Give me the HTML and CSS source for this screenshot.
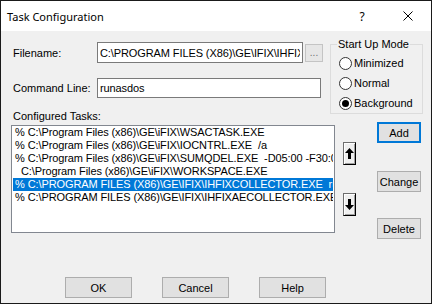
FILE: index.html
```html
<!DOCTYPE html>
<html lang="en">
  <head>
    <meta charset="UTF-8" />
    <title>Task Configuration</title>
    <link rel="stylesheet" href="styles.css">
  </head>
  <body>
    <div class="window">
      <div class="titlebar">
        <span class="title">Task Configuration</span>
        <span class="tb-help">?</span>
        <span class="tb-close">
          <svg width="10" height="10" viewBox="0 0 10 10">
            <path d="M0.5 0.5 L9.5 9.5 M9.5 0.5 L0.5 9.5" stroke="#000" stroke-width="1" fill="none" />
          </svg>
        </span>
      </div>

      <div class="dialog">
        <div class="top">
          <div class="fields">
            <div class="field-row filename-row">
              <label class="field-label" for="filename">Filename:</label>
              <input class="textbox filename" id="filename" type="text" value="C:\PROGRAM FILES (X86)\GE\IFIX\IHFIXCOLLECTOR.EXE" />
              <button class="browse" type="button">...</button>
            </div>
            <div class="field-row cmd-row">
              <label class="field-label" for="cmdline">Command Line:</label>
              <input class="textbox cmdline" id="cmdline" type="text" value="runasdos" />
            </div>
            <div class="tasks-label">Configured Tasks:</div>
          </div>

          <!-- startup mode group -->
          <fieldset class="mode">
            <legend>Start Up Mode</legend>
            <div class="radio"><span class="circle"></span>Minimized</div>
            <div class="radio"><span class="circle"></span>Normal</div>
            <div class="radio"><span class="circle checked"></span>Background</div>
          </fieldset>
        </div>

        <div class="tasks">
          <ul class="task-list">
            <li>% C:\Program Files (x86)\GE\iFIX\WSACTASK.EXE</li>
            <li>% C:\Program Files (x86)\GE\iFIX\IOCNTRL.EXE&nbsp; /a</li>
            <li>% C:\Program Files (x86)\GE\iFIX\SUMQDEL.EXE&nbsp; -D05:00 -F30:00</li>
            <li>&nbsp; C:\Program Files (x86)\GE\iFIX\WORKSPACE.EXE</li>
            <li class="selected">% C:\PROGRAM FILES (X86)\GE\IFIX\IHFIXCOLLECTOR.EXE&nbsp; runasdos</li>
            <li>% C:\PROGRAM FILES (X86)\GE\IFIX\IHFIXAECOLLECTOR.EXE</li>
          </ul>

          <div class="arrows">
            <button class="arrow-btn up" type="button">
              <svg width="9" height="11" viewBox="0 0 9 11">
                <path d="M4.5 0 L9 5 L6 5 L6 11 L3 11 L3 5 L0 5 Z" fill="#000" />
              </svg>
            </button>
            <button class="arrow-btn down" type="button">
              <svg width="9" height="11" viewBox="0 0 9 11">
                <path d="M4.5 11 L9 6 L6 6 L6 0 L3 0 L3 6 L0 6 Z" fill="#000" />
              </svg>
            </button>
          </div>

          <div class="actions">
            <button class="btn default add" type="button">Add</button>
            <button class="btn change" type="button">Change</button>
            <button class="btn delete" type="button">Delete</button>
          </div>
        </div>

        <div class="footer">
          <button class="btn wide" type="button">OK</button>
          <button class="btn wide" type="button">Cancel</button>
          <button class="btn wide" type="button">Help</button>
        </div>
      </div>
    </div>
  </body>
</html>
```

FILE: styles.css
```css
* {
  box-sizing: border-box;
}

body {
  margin: 0;
  font-family: "Liberation Sans", Arial, sans-serif;
  font-size: 11px;
  color: #000;
}

.window {
  width: 432px;
  height: 304px;
  border: 1px solid #1a1a1a;
  display: flex;
  flex-direction: column;
  background-color: #f0f0f0;
}

/* title bar */
.titlebar {
  height: 30px;
  background-color: #fff;
  display: flex;
  align-items: center;
  padding-left: 6px;
}

.title {
  font-family: "Noto Sans", sans-serif;
  font-size: 11px;
  flex: 1;
}

.tb-help {
  font-family: "Noto Sans", sans-serif;
  font-size: 12px;
  width: 46px;
  text-align: center;
}

.tb-close {
  width: 46px;
  display: flex;
  justify-content: center;
}

.dialog {
  flex: 1;
  padding-left: 10px;
}

/* top part: text fields + group box */
.top {
  display: flex;
  height: 91px;
}

.fields {
  width: 319px;
  padding-left: 2px;
  padding-top: 11px;
}

.field-row {
  display: flex;
  align-items: center;
}

.field-label {
  width: 84px;
}

.textbox {
  font-family: "Liberation Sans", Arial, sans-serif;
  font-size: 11px;
  letter-spacing: -0.1px;
  border: 1px solid #7a7a7a;
  background-color: #fff;
  padding: 0 2px;
  margin: 0;
  outline: none;
  color: #000;
}

.filename {
  width: 206px;
  height: 21px;
}

.browse {
  width: 18px;
  height: 18px;
  margin-left: 2px;
  padding: 0;
  border: 1px solid #c4c4c4;
  background-color: #e6e6e6;
  color: #707070;
  font-size: 10px;
  line-height: 10px;
}

.cmd-row {
  margin-top: 15px;
}

.cmdline {
  width: 224px;
  height: 20px;
}

.tasks-label {
  margin-top: 12px;
  line-height: 12px;
}

.mode {
  margin: 7px 0 0 0;
  width: 93px;
  height: 76px;
  border: 1px solid #dcdcdc;
  padding: 0 0 0 6px;
}

.mode legend {
  padding: 0 1px;
  line-height: 13px;
}

.radio {
  display: flex;
  align-items: center;
  height: 20px;
  margin-left: 2px;
}

.radio:first-of-type {
  margin-top: 2px;
}

.circle {
  width: 13px;
  height: 13px;
  border: 1px solid #333;
  border-radius: 50%;
  background-color: #fff;
  margin-right: 2px;
  display: flex;
  align-items: center;
  justify-content: center;
}

.circle.checked::after {
  content: "";
  width: 7px;
  height: 7px;
  border-radius: 50%;
  background-color: #000;
}

/* task list row */
.tasks {
  display: flex;
  align-items: flex-start;
}

.task-list {
  list-style: none;
  margin: 3px 0 0 0;
  padding: 0 1px;
  width: 324px;
  height: 108px;
  border: 1px solid #828790;
  background-color: #fff;
  overflow: hidden;
  letter-spacing: -0.1px;
}

.task-list li {
  height: 13px;
  line-height: 13px;
  padding-left: 2px;
  white-space: nowrap;
  overflow: hidden;
}

.task-list li.selected {
  background-color: #0078d7;
  color: #fff;
}

.arrows {
  display: flex;
  flex-direction: column;
  margin-left: 8px;
  margin-top: 20px;
}

.arrow-btn {
  appearance: none;
  width: 13px;
  height: 23px;
  padding: 0;
  background-color: #f0f0f0;
  border: 1px solid;
  border-color: #6e6e6e #000 #000 #6e6e6e;
  box-shadow: inset 1px 1px 0 #fff, inset -1px -1px 0 #a0a0a0;
  display: flex;
  align-items: center;
  justify-content: center;
}

.arrow-btn.down {
  margin-top: 28px;
}

.actions {
  display: flex;
  flex-direction: column;
  margin-left: 21px;
}

.btn {
  font-family: "Liberation Sans", Arial, sans-serif;
  font-size: 11px;
  background-color: #e1e1e1;
  border: 1px solid #adadad;
  padding: 0;
  color: #000;
  height: 21px;
  width: 44px;
}

.btn.default {
  border-color: #0078d7;
  box-shadow: inset 0 0 0 1px #0078d7;
}

.change {
  margin-top: 28px;
}

.delete {
  margin-top: 26px;
}

.footer {
  display: flex;
  gap: 30px;
  margin-top: 38px;
  padding-left: 54px;
}

.btn.wide {
  width: 67px;
}
```
